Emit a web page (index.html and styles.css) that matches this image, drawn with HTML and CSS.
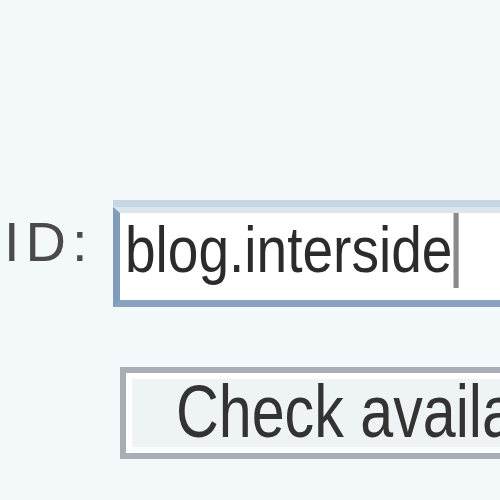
FILE: index.html
```html
<!DOCTYPE html>
<html>
<head>
<meta charset="utf-8">
<link rel="stylesheet" href="styles.css">
</head>
<body>
<div class="page">
  <div class="row">
    <div class="label">ID:</div>
    <div class="field">
      <div class="field-inner"><span class="value">blog.interside<span class="caret"></span></span></div>
    </div>
  </div>
  <div class="actions">
    <div class="button">
      <div class="button-face"><span class="button-text">Check availability</span></div>
    </div>
  </div>
</div>
</body>
</html>
```
FILE: styles.css
```css
html, body {
  margin: 0;
  padding: 0;
  background: #f3f8fa;
  overflow: hidden;
}
.page {
  width: 500px;
  height: 500px;
  overflow: hidden;
  padding-top: 200px;
  box-sizing: border-box;
}
.row {
  display: flex;
  align-items: flex-start;
  width: 900px;
}
.label {
  font-family: "Liberation Sans", Arial, sans-serif;
  font-size: 56px;
  line-height: normal;
  color: #4a4a4a;
  letter-spacing: 6px;
  margin-top: 9px;
  padding-left: 4px;
  width: 113px;
  box-sizing: border-box;
  white-space: nowrap;
}
.field {
  border-top: 7px solid #c7d6e3;
  width: 700px;
}
.field-inner {
  border-left: 7px solid #7f9dbb;
  border-top: 6px solid #dbe5ee;
  border-bottom: 7px solid #88a3bf;
  background: #ffffff;
  height: 87px;
  padding-left: 5px;
  font-family: "Liberation Sans", Arial, sans-serif;
  font-size: 64px;
  line-height: 73px;
  color: #2b2b2b;
  white-space: nowrap;
  overflow: hidden;
}
.value {
  display: inline-block;
  transform: scaleX(0.86);
  transform-origin: left center;
}
.caret {
  display: inline-block;
  width: 6px;
  height: 75px;
  background: #8a8a8a;
  vertical-align: -16px;
  margin-left: 1px;
}
.actions {
  padding-top: 60px;
  padding-left: 120px;
}
.button {
  border: 6px solid #a9adb5;
  width: 700px;
  background: #eef3f6;
}
.button-face {
  border-top: 6px solid #ffffff;
  border-left: 6px solid #ffffff;
  border-bottom: 6px solid #fafcfd;
  height: 68px;
  padding-left: 44px;
  font-family: "Liberation Sans", Arial, sans-serif;
  font-size: 74px;
  line-height: 66px;
  color: #333333;
  white-space: nowrap;
  overflow: hidden;
}
.button-text {
  display: inline-block;
  transform: scaleX(0.8);
  transform-origin: left center;
}
```
